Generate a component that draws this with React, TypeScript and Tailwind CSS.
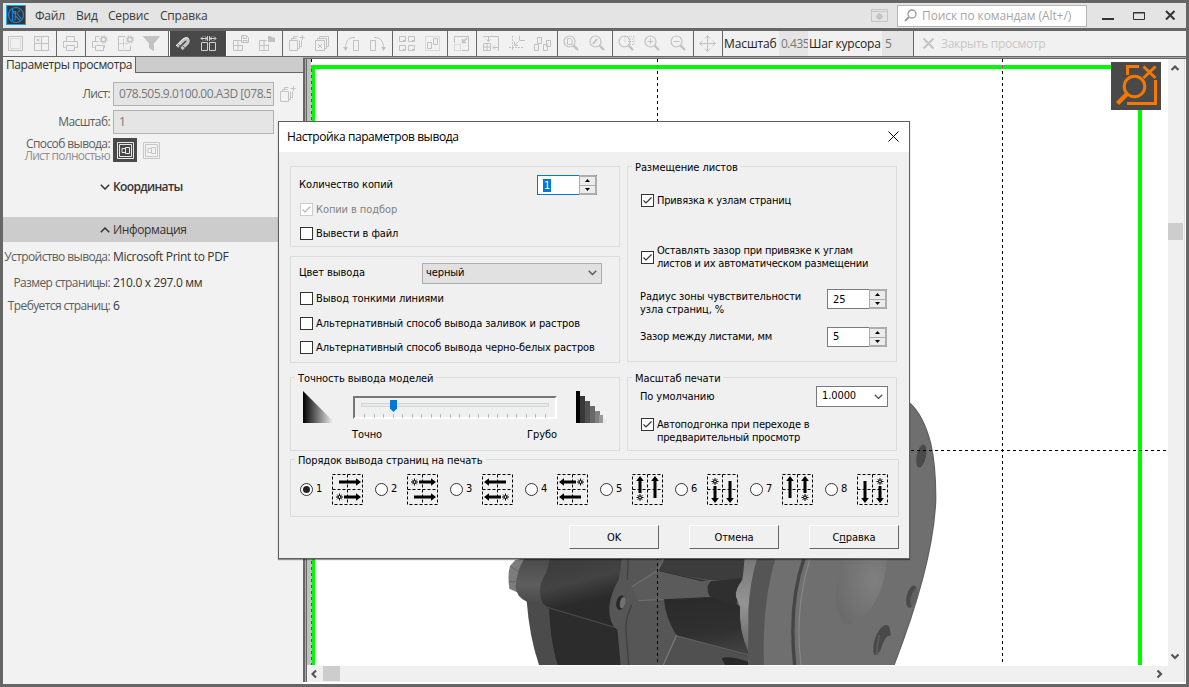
import React from "react";

type Kids = { children?: React.ReactNode };

/* ---------- toolbar icons ---------- */

function Icon({ children, c = "#c2c2c2" }: Kids & { c?: string }) {
  return (
    <span className="flex w-[26px] shrink-0 items-center justify-center">
      <svg width="17" height="17" viewBox="0 0 17 17" fill="none" stroke={c} strokeWidth="1" className="mr-px">
        {children}
      </svg>
    </span>
  );
}

function Tools({ w, children }: Kids & { w: string }) {
  return <div className={`flex h-full shrink-0 items-center border-r border-[#666] pl-px ${w}`}>{children}</div>;
}

const gear = (x: number, y: number) => (
  <g>
    <circle cx={x} cy={y} r="2.3" strokeWidth="1.4" />
    <circle cx={x} cy={y} r="3.6" strokeWidth="1.2" strokeDasharray="1.4 1.4" />
  </g>
);
const lens = (
  <g>
    <circle cx="6.5" cy="6.5" r="5.5" strokeWidth="1.2" />
    <path d="M10.5 10.5 L15 15" strokeWidth="2.4" />
  </g>
);

function Toolbar() {
  return (
    <div className="flex h-[25px] items-center bg-[#f1f1f1]">
      <div className="flex h-full w-[54px] shrink-0 items-center border-r border-[#666]">
        <Icon>
          <rect x="1.5" y="1.5" width="14" height="14" />
          <rect x="3.5" y="3.5" width="10" height="10" strokeDasharray="1 1" />
        </Icon>
        <Icon>
          <rect x="1.5" y="1.5" width="14" height="14" />
          <path d="M8.5 1.5v14M1.5 8.5h14M3.5 3.5l3 3M6.5 3.5l-3 3" />
        </Icon>
      </div>
      <Tools w="w-[29px]">
        <Icon>
          <path d="M4.5 6V1.5h8V6M3.5 12.500h-2v-6h14v6h-2M4.500 10.500h8v5h-8z" />
        </Icon>
      </Tools>
      <Tools w="w-[83px]">
        <Icon>
          <path d="M4.5 6V1.500h4M3.500 12.500h-2v-6h6M13.500 10v2.500h-1M4.500 10.500h8v5h-8z" />
          {gear(12.5, 4.5)}
        </Icon>
        <Icon>
          <path d="M8.500 1.500h-7v14h12v-5" />
          <path d="M6.500 3.500v10M2.500 8.500h9" strokeDasharray="2 1" />
          {gear(13, 4.5)}
        </Icon>
        <Icon>
          <path d="M.5 1.500h16l-6 7v7l-4-2.500V8.500z" fill="#c2c2c2" />
        </Icon>
      </Tools>
      <div className="h-full w-px shrink-0 bg-white" />
      <div className="flex h-full w-[57px] shrink-0 items-center border-r border-white bg-[#494949]">
        <Icon c="#ddd">
          <path d="M3 11.500 L9.500 5 Q12 3 13.500 4.300 Q15 6 13 8.500 L7.500 14" strokeWidth="3.200" stroke="#c6c6c6" />
          <path d="M2 11 L9 4 Q12.500 1.200 14.700 3.500" stroke="#eee" />
          <path d="M3.700 8.800l2.400 2.400M8.600 10.800l2.400 2.400" stroke="#6a6a6a" />
        </Icon>
        <Icon c="#cfcfcf">
          <path d="M1.500 7.500h6v8h-6zM9.500 7.500h6v8h-6zM1 3.500h6M16 3.500h-6M7.500 1v5M9.500 1v5M3 1.500l-2 2 2 2M14 1.500l2 2-2 2M5 1.500l2 2-2 2M12 1.500l-2 2 2 2" />
        </Icon>
      </div>
      <Tools w="w-[56px]">
        <Icon>
          <path d="M9.500 5.500h-8v10h9v-5M6 6v9M2 10.500h9" />
          <path d="M9.500.500h5l2 2v5h-7zM11 1v2.500h3.500V1M11 7.500V5.500h4v2" />
        </Icon>
        <Icon>
          <path d="M8.500 5.500h-7v10h9v-6M6 6v9M2 10.500h9" />
          <path d="M10 1h3l1 1.500h3v4.500h-7z" fill="#c2c2c2" stroke="none" />
        </Icon>
      </Tools>
      <Tools w="w-[55px]">
        <Icon>
          <path d="M1.500 5.500h8v10h-8zM3.500 5V3.500h5M10 13.500h1.500v-8M5.500 3V1.500h4M12 11.500h1.500v-6M11.500 2.500h5M14.500 0v5" />
        </Icon>
        <Icon>
          <path d="M1.500 5.500h9v10h-9zM3.500 5V3.500h9v10H11M5.500 3V1.500h9v10H13M4 9l4 4M8 9l-4 4" />
        </Icon>
      </Tools>
      <Tools w="w-[55px]">
        <Icon>
          <path d="M10.500 5.500h5v10h-5zM12 2.500C6 2 2.500 6 2.500 13" />
          <path d="M0 12h5l-2.500 4z" fill="#c2c2c2" stroke="none" />
        </Icon>
        <Icon>
          <path d="M1.500 5.500h5v10h-5zM5 2.500C11 2 14.500 6 14.500 13" />
          <path d="M12 12h5l-2.500 4z" fill="#c2c2c2" stroke="none" />
        </Icon>
      </Tools>
      <Tools w="w-[55px]">
        <Icon>
          <path d="M1.500 1.500h6v5h-6zM10.500 1.500h6v5h-6zM1.500 10.500h6v5h-6zM10.500 10.500h6v5h-6zM5 5.500h2.500M14 5.500h2.500M5 14.500h2.500M14 14.500h2.500" />
        </Icon>
        <Icon>
          <rect x="1.500" y="1.500" width="14" height="14" strokeDasharray="1 1" />
          <path d="M3.500 7.500h4v6h-4zM9.500 3.500h4v6h-4z" />
        </Icon>
      </Tools>
      <Tools w="w-[29px]">
        <Icon>
          <path d="M1.500 8V1.500h14v14H9" />
          <path d="M1.500 9.500h6v6h-6z" strokeDasharray="1 1" />
          <path d="M14 3L10 7M9.500 4v3.500H13" strokeWidth="1.500" />
        </Icon>
      </Tools>
      <Tools w="w-[81px]">
        <Icon>
          <path d="M1 1.500h15.500V16M1.500 8.500h7v7h-7zM5 8.500v7M1.500 12h7M6.500 2v5M4.500 4.500l2 2 2-2M16 12.500h-5M13 10.500l-2 2 2 2" />
        </Icon>
        <Icon>
          <path d="M4.500 1v15M1 12.500h15" strokeDasharray="2 1" />
          <path d="M11.500 1v4.500H17M10.500 6.500L7 10M6.500 6.500v4H10" />
        </Icon>
        <Icon>
          <path d="M.500 9.500h4v6h-4zM3.500 2.500h4v6h-4zM9.500 9.500h4v6h-4zM12.500 5.500h4v6h-4z" />
        </Icon>
      </Tools>
      <Tools w="w-[55px]">
        <Icon>
          {lens}
          <path d="M4.500 3.500h3l1.500 1.500v4.500H4.500z" />
        </Icon>
        <Icon>
          {lens}
          <path d="M4 9l4-5" strokeWidth="2" />
        </Icon>
      </Tools>
      <Tools w="w-[81px]">
        <Icon>
          {lens}
          <path d="M7 1.500h9v8H9M7 1.500v5M10 4h5M10 6.500h5" strokeDasharray="1 1" />
        </Icon>
        <Icon>
          {lens}
          <path d="M3.500 6.500h6M6.500 3.500v6" />
        </Icon>
        <Icon>
          {lens}
          <path d="M3.500 6.500h6" />
        </Icon>
      </Tools>
      <Tools w="w-[29px]">
        <Icon>
          <path d="M8.500 1v15M1 8.500h15M6 3.500l2.500-3 2.500 3M6 13.500l2.500 3 2.500-3M3.500 6l-3 2.500 3 2.500M13.500 6l3 2.500-3 2.500" />
        </Icon>
      </Tools>
      <div className="flex h-full w-[191px] shrink-0 items-center border-r border-[#666] text-[12px] text-[#222]">
        <span className="w-[56px] pl-px tracking-[-0.1px]">Масштаб</span>
        <span className="flex h-full w-[29px] items-center overflow-hidden bg-[#e5e5e5] pl-[2px] tracking-[-0.5px] text-[#777]">0.435</span>
        <span className="w-[74px] pl-px tracking-[-0.2px] whitespace-nowrap">Шаг курсора</span>
        <span className="flex h-full flex-1 items-center bg-[#e5e5e5] pl-[3px] text-[#777]">5</span>
      </div>
      <span className="flex w-[27px] items-center pl-[8px]">
        <svg width="13" height="13" viewBox="0 0 13 13" stroke="#c4c4c4" strokeWidth="2">
          <path d="M1.500 1.500l10 10M11.500 1.500l-10 10" />
        </svg>
      </span>
      <span className="text-[12px] tracking-[-0.3px] whitespace-nowrap text-[#c6c6c6]">Закрыть просмотр</span>
    </div>
  );
}

function TitleBar() {
  return (
    <div className="flex h-[25px] items-center bg-[#e4e4e4] pl-[3px] text-[12px] text-[#3a3a3a]">
      <svg width="20" height="20" viewBox="0 0 20 20" className="mb-px" fill="none">
        <rect x=".500" y=".500" width="19" height="19" fill="#363432" stroke="#00aef0" />
        <circle cx="10" cy="10" r="7.500" stroke="#1d84d8" strokeWidth="1.200" />
        <path d="M6.500 4v12M6.500 6.500l3 3v-3H6.500M14.500 4.500L11 8.500 15.500 14M9 10.500l5 5M9 10.500v5" stroke="#1d84d8" strokeWidth="1.100" />
      </svg>
      <div className="flex gap-3 pl-[9px] tracking-[-0.2px] whitespace-nowrap">
        <span className="w-[29px]">Файл</span>
        <span className="w-[20px]">Вид</span>
        <span className="w-[40px]">Сервис</span>
        <span className="w-[45px]">Справка</span>
      </div>
      <div className="flex-1" />
      <svg width="17" height="13" viewBox="0 0 17 13" fill="none" stroke="#c4c4c4" className="mr-[9px]">
        <path d="M.500.500h16v12H.500zM.500 2.500h16" />
        <circle cx="8.500" cy="7.500" r="2" strokeWidth="2" />
        <path d="M8.500 4v7M5 7.500h7" />
      </svg>
      <div className="flex h-[22px] w-[190px] items-center border border-[#b5b5b5] bg-white pl-[6px] text-[#a6a6a6]">
        <svg width="13" height="13" viewBox="0 0 13 13" fill="none" stroke="#999" strokeWidth="1.300">
          <circle cx="8" cy="5" r="4" />
          <path d="M5 8L1 12" strokeWidth="1.800" />
        </svg>
        <span className="pl-[5px] tracking-[-0.1px] whitespace-nowrap">Поиск по командам (Alt+/)</span>
      </div>
      <svg width="99" height="22" viewBox="0 0 99 22" fill="none" stroke="#333">
        <path d="M15 14h12" strokeWidth="2" />
        <path d="M46.500 7.500h11v7h-11zM46 8h12" />
        <path d="M79 6l8.500 8.500M87.500 6L79 14.500" strokeWidth="2" />
      </svg>
    </div>
  );
}

/* ---------- side panel ---------- */

function Chevron({ up, c = "#333", w = 10 }: { up?: boolean; c?: string; w?: number }) {
  return (
    <svg width={w} height={w * 0.6} viewBox="0 0 10 6" fill="none" stroke={c} strokeWidth="1.500">
      <path d={up ? "M.800 5.200L5 1l4.200 4.200" : "M.800.800L5 5 9.200.800"} />
    </svg>
  );
}

function SheetGlyph({ c }: { c: string }) {
  return (
    <svg width="17" height="17" viewBox="0 0 17 17" fill="none" stroke={c}>
      <path d="M.500.500h16v16H.500zM2.500 2.500h12v12h-12zM5 6.500h3.500v4H5zM8.500 5.500h4v6h-4z" />
    </svg>
  );
}

function Row({ label, h, children }: Kids & { label: React.ReactNode; h: string }) {
  return (
    <div className={`flex items-center ${h}`}>
      <div className="flex w-[107px] shrink-0 justify-end text-right leading-[12px] tracking-[-0.6px] whitespace-nowrap text-[#5c5c5c]">
        <span>{label}</span>
      </div>
      <div className="flex items-center pl-[3px] tracking-[-0.33px] whitespace-nowrap text-[#333]">{children}</div>
    </div>
  );
}

function SidePanel() {
  return (
    <div className="w-[300px] shrink-0 bg-[#f2f2f2] text-[12px] text-[#333]">
      <div className="flex h-4">
        <div className="flex w-[133px] items-center border-r border-[#666] pl-[3px] leading-4 tracking-[-0.4px] whitespace-nowrap">
          Параметры просмотра
        </div>
        <div className="flex-1 border-b border-[#666] bg-[#ccc]" />
      </div>
      <div className="pt-[7px]">
        <Row label="Лист:" h="h-7">
          <div className="flex h-6 w-[161px] items-center overflow-hidden border border-[#b2b2b2] bg-[#e5e5e5] pr-[2px] pl-[5px] text-[#777]">
            <span className="overflow-hidden tracking-[-0.45px]">078.505.9.0100.00.A3D [078.505</span>
          </div>
          <span className="pl-[5px]">
            <svg width="17" height="17" viewBox="0 0 17 17" fill="none" stroke="#c4c4c4">
              <path d="M1.500 5.500h8v10h-8zM3.500 5V3.500h5M10 13.500h1.500v-8M5.500 3V1.500h4M12 11.500h1.500v-6M11.500 2.500h5M14.500 0v5" />
            </svg>
          </span>
        </Row>
        <Row label="Масштаб:" h="h-7">
          <div className="flex h-6 w-[161px] items-center border border-[#b2b2b2] bg-[#e5e5e5] pl-[5px] text-[#777]">1</div>
        </Row>
        <Row
          h="h-7"
          label={
            <>
              Способ вывода:
              <br />
              <span className="tracking-[-0.7px] text-[#909090]">Лист полностью</span>
            </>
          }
        >
          <span className="flex size-6 items-center justify-center bg-[#494949]">
            <SheetGlyph c="#e8e8e8" />
          </span>
          <span className="pl-[6px]">
            <SheetGlyph c="#c8c8c8" />
          </span>
        </Row>
      </div>
      <div className="mt-[10px] flex h-[26px] items-center gap-[3px] pl-[97px] font-semibold">
        <Chevron />
        <span className="tracking-[-0.65px]">Координаты</span>
      </div>
      <div className="mt-[17px] flex h-[25px] items-center gap-[3px] bg-[#ccc] pl-[97px] font-medium tracking-[-0.35px]">
        <Chevron up />
        Информация
      </div>
      <div className="pt-[2px]">
        <Row label="Устройство вывода:" h="h-[26px]">Microsoft Print to PDF</Row>
        <Row label="Размер страницы:" h="h-[26px]">210.0 x 297.0 мм</Row>
        <Row label="Требуется страниц:" h="h-5">6</Row>
      </div>
    </div>
  );
}

/* ---------- drawing area ---------- */

function Drawing() {
  return (
    <svg width="857" height="607" viewBox="311 59 857 607" className="block bg-white">
      <defs>
        <linearGradient id="case" x1="0" y1="0" x2="0.200" y2="1">
          <stop offset="0" stopColor="#393939" />
          <stop offset=".3" stopColor="#434343" />
          <stop offset=".5" stopColor="#2a2a2a" />
          <stop offset="1" stopColor="#2a2a2a" />
        </linearGradient>
        <linearGradient id="boss" x1="0" y1="0" x2="0" y2="1">
          <stop offset="0" stopColor="#4a4a4a" />
          <stop offset=".5" stopColor="#5e5e5e" />
          <stop offset="1" stopColor="#444" />
        </linearGradient>
        <linearGradient id="lower" x1="0" y1="0" x2="0.200" y2="1">
          <stop offset="0" stopColor="#2a2a2a" />
          <stop offset=".6" stopColor="#303030" />
          <stop offset="1" stopColor="#444" />
        </linearGradient>
        <linearGradient id="lug" x1="0" y1="0" x2="0" y2="1">
          <stop offset="0" stopColor="#777" />
          <stop offset=".5" stopColor="#949494" />
          <stop offset="1" stopColor="#666" />
        </linearGradient>
        <radialGradient id="dish" cx=".75" cy=".35" r=".8">
          <stop offset="0" stopColor="#808080" />
          <stop offset="1" stopColor="#6b6b6b" />
        </radialGradient>
        <clipPath id="area">
          <rect x="0" y="0" width="1380" height="825" />
        </clipPath>
      </defs>
      <g transform="translate(490 390) scale(.33333)">
        <g clipPath="url(#area)">
          <path d="M76 510 L105 505 L120 620 L75 604 L58 596 Q52 555 60 528 Z" fill="#7c7c7c" />
          <path d="M60 528 L85 545 M58 575 L82 575" stroke="#666" strokeWidth="3" />
          <path d="M104 505 H200 V660 L112 636 Q78 620 77 590 Q80 540 104 505 Z" fill="url(#boss)" />
          <path d="M110 632 L185 650 L215 825 H147 Q118 740 110 632 Z" fill="#4b4b4b" />
          <path d="M182 500 H420 L395 825 H204 Q182 760 178 655 L160 642 Q146 620 152 585 Q160 560 168 550 Z" fill="url(#case)" />
          <path d="M170 655 L375 712 L395 825 H204 Q182 760 178 655 Z" fill="#2c2c2c" />
          <path d="M172 652 L375 712" stroke="#484848" strokeWidth="4" />
          <path d="M396 500 H800 L775 825 H392 L382 720 Q356 700 358 650 Q362 610 386 570 Q392 540 396 500 Z" fill="#565656" />
          <path d="M520 505 H775 L752 575 L660 570 L505 545 Z" fill="#3c3c3c" />
          <path d="M505 545 L650 575" stroke="#303030" strokeWidth="6" />
          <path d="M650 575 L755 565 L740 640 L755 660 L655 622 Z" fill="#2f2f2f" />
          <path d="M425 590 L502 542 L635 574 L666 570 Q640 595 662 621 L520 628 L445 632 Z" fill="#5b5b5b" />
          <path d="M425 590 L502 542 L522 505 M444 632 L520 628" stroke="#6c6c6c" strokeWidth="4" fill="none" />
          <path d="M522 628 L662 621 L755 650 Q754 720 775 785 L775 825 L560 738 Q525 680 522 628 Z" fill="url(#lower)" />
          <path d="M560 738 L775 800 V825 H522 Z" fill="#505050" />
          <path d="M560 738 L775 795" stroke="#5c5c5c" strokeWidth="4" />
          <path d="M695 805 Q715 795 775 815 V825 H705 Z" fill="#292929" />
          <path d="M425 645 Q405 690 408 720 Q412 770 416 825 M415 500 L412 570" stroke="#404040" strokeWidth="4" fill="none" />
          <path d="M560 735 L520 825" stroke="#777" strokeWidth="4" />
          <ellipse cx="392" cy="638" rx="13" ry="22" fill="#282828" transform="rotate(12 392 638)" />
          <ellipse cx="398" cy="638" rx="8" ry="17" fill="#717171" transform="rotate(12 398 638)" />
          <path d="M764 500 H810 L795 560 L778 660 L775 785 Q746 720 750 650 L738 620 Q735 595 758 570 Z" fill="url(#lug)" />
          <path d="M803 500 H870 L860 825 H775 V660 Q780 570 803 500 Z" fill="#555" />
          <path d="M858 500 L1258 38 Q1300 75 1322 160 Q1338 230 1337 330 Q1330 520 1212 825 H822 Q815 640 858 500 Z" fill="#6f6f6f" />
          <path d="M942 505 Q895 640 914 825" stroke="#454545" strokeWidth="10" fill="none" />
          <path d="M960 505 Q912 660 933 825" stroke="#858585" strokeWidth="4" fill="none" />
          <path d="M1060 500 H1190 Q1188 600 1132 668 Q1085 715 1058 698 Q1015 640 1060 500 Z" fill="url(#dish)" />
          <path d="M1258 38 Q1300 75 1322 160 Q1338 230 1337 330 Q1330 520 1212 825" fill="none" stroke="#626262" strokeWidth="4" />
          <ellipse cx="1294" cy="198" rx="14" ry="35" fill="#4a4a4a" transform="rotate(12 1294 198)" />
          <ellipse cx="1265" cy="620" rx="15" ry="34" fill="#4a4a4a" transform="rotate(14 1265 620)" />
          <ellipse cx="1272" cy="622" rx="9" ry="28" fill="#606060" transform="rotate(14 1272 622)" />
          <path d="M1203 737 L1198 710 Q1188 698 1172 714 Q1146 748 1150 790 Q1158 804 1172 780 Q1186 730 1203 737 Z" fill="#494949" />
          <path d="M1168 735 Q1160 765 1160 795" stroke="#5a5a5a" strokeWidth="6" fill="none" />
        </g>
      </g>
      <rect x="311" y="69" width="1" height="596" fill="#bcbcbc" />
      <path d="M1140 69V665M311 67H1142" stroke="#00fb00" strokeWidth="4" />
      <path d="M313.500 65V665" stroke="#00fb00" strokeWidth="3" />
      <path d="M311.500 69V665" stroke="#c010b0" strokeDasharray="3 3" />
      <path d="M311.500 59V62" stroke="#000" />
      <path d="M657.500 59V664M1002.500 59V664M311 450.500H1168" stroke="#000" strokeDasharray="3 3" />
      <path d="M657.500 65V68M1002.500 65V68" stroke="#e020e0" />
      <g>
        <rect x="1111" y="62" width="50" height="48" fill="#494949" />
        <g fill="none" stroke="#f57900" strokeWidth="3">
          <path d="M1127.500 75V66.500H1139M1155.500 80V103.500H1127M1143.500 66.500L1155.500 78M1155.500 66.500L1143.500 78" />
          <circle cx="1134.500" cy="86.500" r="10.300" />
          <path d="M1127.500 93.500L1117.500 103.500" strokeWidth="4.500" />
        </g>
      </g>
    </svg>
  );
}

function Arrow({ d }: { d: string }) {
  return (
    <svg width="10" height="10" viewBox="0 0 10 10" fill="none" stroke="#555" strokeWidth="2.200">
      <path d={d} />
    </svg>
  );
}

function Viewport() {
  return (
    <div className="flex flex-1 flex-col">
      <div className="h-[2px] border-b border-[#666] bg-[#a6a6a6]" />
      <div className="flex flex-1 border-b-2 border-white">
        <div className="flex w-2 shrink-0 bg-[#f0f0f0]">
          <div className="w-[2px] bg-[#666]" />
          <div className="w-px bg-[#aaa]" />
          <div className="w-px bg-[#666]" />
          <div className="mb-[17px] flex-1 bg-[#c0c0c0]" />
        </div>
        <div className="flex w-[857px] flex-col bg-[#f0f0f0]">
          <Drawing />
          <div className="flex h-4 items-center justify-between bg-[#f0f0f0] pr-1">
            <div className="flex h-full items-center">
              <Arrow d="M5 1.500L1.500 5 5 8.500" />
              <div className="ml-[2px] h-[15px] w-[17px] self-start bg-[#cdcdcd]" />
            </div>
            <Arrow d="M3.500 1.500L7 5 3.500 8.500" />
          </div>
        </div>
        <div className="flex w-4 flex-col items-start bg-[#f0f0f0]">
          <div className="flex h-[19px] items-center pl-[2px]">
            <Arrow d="M1.500 6L5 2.500l3.500 3.500" />
          </div>
          <div className="mt-[145px] h-[17px] w-[15px] bg-[#cdcdcd]" />
          <div className="flex-1" />
          <div className="mb-[21px] pl-[2px]">
            <Arrow d="M1.500 3.500L5 7l3.500-3.500" />
          </div>
        </div>
        <div className="w-[2px] border-l border-[#ddd] bg-white" />
      </div>
    </div>
  );
}

/* ---------- dialog ---------- */

function Group({ title, className, children }: Kids & { title?: string; className: string }) {
  return (
    <div className={`relative border border-[#dcdcdc] ${className}`}>
      {title && (
        <span className="absolute -top-[6px] left-[4px] bg-[#f0f0f0] px-[3px] leading-[13px] whitespace-nowrap">{title}</span>
      )}
      {children}
    </div>
  );
}

function Check({ on, off, top, children }: Kids & { on?: boolean; off?: boolean; top?: boolean }) {
  return (
    <label
      className={`flex gap-[3px] pl-px leading-[13px] whitespace-nowrap ${top ? "items-start" : "items-center"} ${off ? "text-[#838383]" : ""}`}
    >
      <span className={`flex size-[13px] shrink-0 items-center justify-center border bg-white ${off ? "border-[#ccc]" : "border-[#333]"}`}>
        {on && (
          <svg width="11" height="11" viewBox="0 0 11 11" fill="none" stroke={off ? "#b8b8b8" : "#333"} strokeWidth="1.200">
            <path d="M1.500 5.500L4 8l5.500-5.500" />
          </svg>
        )}
      </span>
      <span>{children}</span>
    </label>
  );
}

function Spin({ value, active }: { value: string; active?: boolean }) {
  return (
    <div className={`flex h-5 w-[60px] shrink-0 border border-r-[#adadad] bg-white ${active ? "border-[#0078d7]" : "border-[#7a7a7a]"}`}>
      <div className="flex flex-1 items-center pl-[5px]">
        {active ? <span className="bg-[#0078d7] px-px leading-[13px] text-white">{value}</span> : value}
      </div>
      <div className="-my-px flex w-[17px] flex-col border border-r-0 border-[#adadad] bg-[#adadad] p-px pl-0">
        <div className="flex flex-1 items-center justify-center bg-[#ececec]">
          <svg width="5" height="3" viewBox="0 0 5 3"><path d="M0 3L2.500 0 5 3z" /></svg>
        </div>
        <div className="mt-px flex flex-1 items-center justify-center bg-[#ececec]">
          <svg width="5" height="3" viewBox="0 0 5 3"><path d="M0 0L2.500 3 5 0z" /></svg>
        </div>
      </div>
    </div>
  );
}

const orders = [
  "",
  "scale(1 -1)",
  "scale(-1 1)",
  "scale(-1 -1)",
  "rotate(-90) scale(1 -1)",
  "scale(1 -1) rotate(-90) scale(1 -1)",
  "rotate(-90)",
  "scale(1 -1) rotate(-90)",
];

function OrderIcon({ t }: { t: string }) {
  return (
    <svg width="31" height="31" viewBox="-15.500 -15.500 31 31" fill="none" stroke="#000" className="shrink-0">
      <rect x="-15" y="-15" width="30" height="30" strokeDasharray="3 2" />
      <path d="M-15 0H15M0-15V15" strokeDasharray="3 2" />
      <g transform={t}>
        <path d="M-8.500-7.500H9M-3.500 7.500H9" strokeWidth="3" />
        <path d="M8.500-11.300L13.500-7.500 8.500-3.700zM8.500 3.700L13.500 7.500 8.500 11.300z" fill="#000" stroke="none" />
        <path d="M-8 4v7M-11.500 7.500h7M-10.300 5.200l4.600 4.600M-5.700 5.200l-4.600 4.600" />
        <circle cx="-8" cy="7.500" r="1.400" fill="#f0f0f0" />
      </g>
    </svg>
  );
}

function Push({ children }: Kids) {
  return (
    <button className="flex h-6 w-[90px] items-center justify-center border border-white border-r-[#666] border-b-[#666] bg-[#f0f0f0] pt-[2px]">
      <span>{children}</span>
    </button>
  );
}

function Slider() {
  return (
    <div className="h-[23px] w-[204px] border-2 border-[#777] border-r-white border-b-white">
      <div className="relative mx-[6px] mt-[5px] h-1 border border-[#d6d6d6] bg-[#e7eaea]">
        <svg width="7" height="12" viewBox="0 0 7 12" className="absolute -top-1 left-[28px]">
          <path d="M0 0h7v8.500L3.500 12 0 8.500z" fill="#0078d7" />
        </svg>
      </div>
      <div className="mx-[9px] mt-[7px] flex justify-between">
        {Array.from({ length: 20 }, (_, i) => (
          <span key={i} className="h-1 w-px bg-[#b9b9b9]" />
        ))}
      </div>
    </div>
  );
}

function Dialog() {
  const bars = [
    ["#000", 0, 4], ["#383838", 5, 5], ["#505050", 10, 5], ["#686868", 15, 5],
    ["#808080", 20, 5], ["#999", 24, 4], ["#e8e8e8", 28, 4],
  ] as const;
  return (
    <div className="absolute top-[121px] left-[278px] h-[438px] w-[632px] border border-[#5f5f5f] bg-[#f0f0f0] font-['DejaVu_Sans_Condensed','DejaVu_Sans',sans-serif] text-[11px] tracking-[-0.09px] text-black shadow-[0_1px_1px_rgba(0,0,0,.4)]">
      <div className="flex h-[30px] items-center justify-between bg-white pr-[10px] pl-2">
        <span className="font-['Open_Sans','Noto_Sans',sans-serif] text-[12px] tracking-[-0.42px]">Настройка параметров вывода</span>
        <svg width="11" height="11" viewBox="0 0 11 11" stroke="#000" className="mb-[2px]">
          <path d="M.500.500l10 10M10.500.500l-10 10" />
        </svg>
      </div>
      <div className="pt-[14px] pl-[11px]">
        <div className="flex gap-[7px]">
          <div className="w-[330px]">
            <Group className="h-[81px] pt-[6px] pl-2">
              <div className="flex h-6 items-center justify-between pr-[22px]">
                <span className="pt-px">Количество копий</span>
                <Spin value="1" active />
              </div>
              <div className="flex h-6 items-center"><Check on off>Копии в подбор</Check></div>
              <div className="flex h-6 items-center"><Check>Вывести в файл</Check></div>
            </Group>
            <Group className="mt-[9px] h-[107px] pt-1 pl-2">
              <div className="flex h-6 items-center justify-between pr-[17px]">
                <span className="pt-px">Цвет вывода</span>
                <div className="flex h-[21px] w-[180px] items-center justify-between border border-[#adadad] bg-[#e1e1e1] pr-1 pl-[3px]">
                  <span className="pt-px">черный</span>
                  <Chevron c="#555" w={9} />
                </div>
              </div>
              <div className="flex h-[26px] items-center"><Check>Вывод тонкими линиями</Check></div>
              <div className="flex h-6 items-center"><Check>Альтернативный способ вывода заливок и растров</Check></div>
              <div className="flex h-6 items-center"><Check>Альтернативный способ вывода черно-белых растров</Check></div>
            </Group>
            <Group title="Точность вывода моделей" className="mt-[14px] h-[74px] pt-[13px] pl-3">
              <div className="flex items-start">
                <svg width="32" height="32" viewBox="0 0 32 32">
                  <defs>
                    <linearGradient id="fade"><stop offset="0" stopColor="#000" /><stop offset="1" stopColor="#fff" /></linearGradient>
                  </defs>
                  <path d="M0 0L32 32H0z" fill="url(#fade)" />
                </svg>
                <div className="mt-[5px] ml-[18px]"><Slider /></div>
                <svg width="32" height="32" viewBox="0 0 32 32" className="ml-[19px]">
                  {bars.map(([c, x, w]) => (
                    <rect key={x} x={x === 0 ? 0 : x - 1} y={x} width={w} height={32 - x} fill={c} />
                  ))}
                </svg>
              </div>
              <div className="flex w-[254px] justify-between pt-[5px] pl-[49px] leading-[14px]">
                <span>Точно</span>
                <span>Грубо</span>
              </div>
            </Group>
          </div>
          <div className="w-[270px]">
            <Group title="Размещение листов" className="h-[196px] pt-[20px] pl-3">
              <div className="flex h-[26px] items-center tracking-[-0.2px]"><Check on>Привязка к узлам страниц</Check></div>
              <div className="mt-[31px] flex h-[26px] items-center tracking-[-0.22px]">
                <Check on>
                  Оставлять зазор при привязке к углам
                  <br />
                  листов и их автоматическом размещении
                </Check>
              </div>
              <div className="mt-[19px] flex h-5 items-center justify-between pr-[9px] leading-[13px]">
                <span className="pt-[7px]">
                  Радиус зоны чувствительности
                  <br />
                  узла страниц, %
                </span>
                <Spin value="25" />
              </div>
              <div className="mt-[18px] flex h-5 items-center justify-between pr-[9px]">
                <span className="pt-px tracking-[-0.2px]">Зазор между листами, мм</span>
                <Spin value="5" />
              </div>
            </Group>
            <Group title="Масштаб печати" className="mt-[15px] h-[74px] pt-[8px] pl-3">
              <div className="flex h-[21px] items-center justify-between pr-2">
                <span className="pt-px">По умолчанию</span>
                <div className="flex h-[21px] w-[72px] items-center justify-between border border-[#7a7a7a] bg-white pr-1 pl-[5px]">
                  1.0000
                  <Chevron c="#555" w={9} />
                </div>
              </div>
              <div className="mt-[11px] h-[26px] tracking-[-0.2px]">
                <Check on top>
                  Автоподгонка при переходе в
                  <br />
                  предварительный просмотр
                </Check>
              </div>
            </Group>
          </div>
        </div>
        <Group title="Порядок вывода страниц на печать" className="mt-[8px] h-[58px] w-[609px] pt-[14px] pl-[9px]">
          <div className="flex">
            {orders.map((t, i) => (
              <div key={i} className="flex w-[75px] shrink-0 items-center">
                <span className="flex size-[13px] shrink-0 items-center justify-center rounded-full border border-[#333] bg-white">
                  {i === 0 && <span className="size-[7px] rounded-full bg-[#222]" />}
                </span>
                <span className="w-[19px] shrink-0 pl-[3px]">{i + 1}</span>
                <OrderIcon t={t} />
              </div>
            ))}
          </div>
        </Group>
        <div className="flex gap-[30px] pt-2 pl-[279px]">
          <Push>OK</Push>
          <Push>Отмена</Push>
          <Push>С<u>п</u>равка</Push>
        </div>
      </div>
    </div>
  );
}

export default function App() {
  return (
    <div className="relative h-[687px] w-[1189px] overflow-hidden bg-[#666] p-[3px] font-['Open_Sans','Noto_Sans',sans-serif]">
      <div className="flex h-full flex-col">
        <TitleBar />
        <div className="h-[3px] shrink-0" />
        <Toolbar />
        <div className="h-px shrink-0" />
        <div className="flex min-h-0 flex-1">
          <SidePanel />
          <Viewport />
        </div>
      </div>
      <Dialog />
    </div>
  );
}
